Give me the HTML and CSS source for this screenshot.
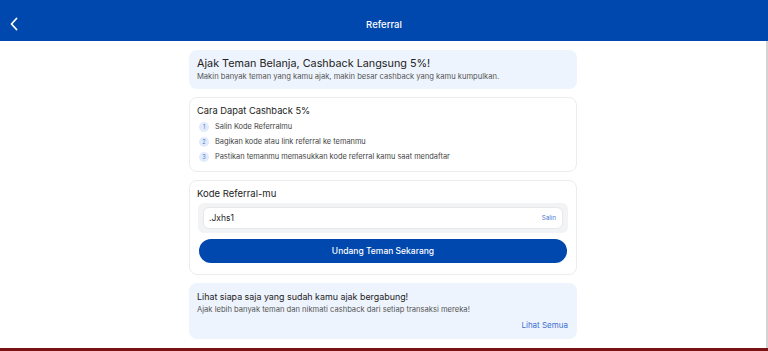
FILE: index.html
```html
<!DOCTYPE html>
<html>
<head>
    <meta charset="UTF-8">
    <meta name="viewport" content="width=device-width, initial-scale=1.0">
    <title>Referral</title>
    <link rel="stylesheet" href="styles.css">
</head>
<body>
    <header class="topbar">
        <button class="back-btn" aria-label="Kembali">
            <svg width="10" height="14" viewBox="0 0 10 14">
                <path d="M7.5 1.5 L2.5 7 L7.5 12.5" fill="none" stroke="#fff" stroke-width="1.8" stroke-linecap="round" stroke-linejoin="round"/>
            </svg>
        </button>
        <div class="topbar-title">Referral</div>
    </header>

    <main class="page">
        <div class="content">
            <section class="card card-info">
                <h2 class="info-title">Ajak Teman Belanja, Cashback Langsung 5%!</h2>
                <p class="info-text">Makin banyak teman yang kamu ajak, makin besar cashback yang kamu kumpulkan.</p>
            </section>

            <section class="card card-white card-steps">
                <h3 class="card-title">Cara Dapat Cashback 5%</h3>
                <ol class="steps">
                    <li><span class="step-num">1</span>Salin Kode Referralmu</li>
                    <li><span class="step-num">2</span>Bagikan kode atau link referral ke temanmu</li>
                    <li><span class="step-num">3</span>Pastikan temanmu memasukkan kode referral kamu saat mendaftar</li>
                </ol>
            </section>

            <section class="card card-white card-code">
                <h3 class="code-title">Kode Referral-mu</h3>
                <div class="code-wrap">
                    <div class="code-box">
                        <span class="code-value">.Jxhs1</span>
                        <button class="copy-btn">Salin</button>
                    </div>
                </div>
                <button class="btn">Undang Teman Sekarang</button>
            </section>

            <section class="card card-info card-friends">
                <h3 class="friends-title">Lihat siapa saja yang sudah kamu ajak bergabung!</h3>
                <p class="friends-text">Ajak lebih banyak teman dan nikmati cashback dari setiap transaksi mereka!</p>
                <a class="see-all" href="#">Lihat Semua</a>
            </section>
        </div>
    </main>

    <div class="bottom-strip"></div>
</body>
</html>
```

FILE: styles.css
```css
* {
    box-sizing: border-box;
}

body {
    font-family: Inter, 'Noto Sans', sans-serif;
    background: white;
    margin: 0;
    height: 351px;
    overflow: hidden;
    display: flex;
    flex-direction: column;
    color: #222;
}

.topbar {
    background: #0048ad;
    height: 41px;
    display: flex;
    align-items: center;
    justify-content: center;
    position: relative;
    flex-shrink: 0;
}

.back-btn {
    position: absolute;
    left: 9px;
    top: 17px;
    background: none;
    border: none;
    padding: 0;
    width: 10px;
    height: 14px;
    display: flex;
}

.topbar-title {
    color: white;
    font-size: 9.5px;
    font-weight: 500;
    margin-top: 7px;
}

.page {
    flex: 1;
    border-right: 2px solid #d4d4d4;
    padding-top: 9px;
    overflow: hidden;
}

.content {
    width: 388px;
    margin: 0 auto;
    display: flex;
    flex-direction: column;
    gap: 8px;
}

.card {
    border-radius: 8px;
}

.card-info {
    background: #eef4fd;
    padding: 7px 8px;
}

.card-white {
    background: white;
    border: 1px solid #ececec;
    padding: 6px 7px 7px;
}

.card-steps {
    padding-bottom: 6px;
}

.info-title {
    margin: 0;
    font-size: 10.8px;
    line-height: 14px;
    font-weight: 400;
}

.info-text {
    margin: 0;
    font-size: 7.6px;
    line-height: 11px;
    color: #555;
}

.card-title {
    margin: 0;
    font-size: 9.3px;
    line-height: 14px;
    font-weight: 400;
}

.steps {
    list-style: none;
    margin: 1px 0 0;
    padding: 0;
}

.steps li {
    display: flex;
    align-items: center;
    height: 15.2px;
    font-size: 7.4px;
    color: #444;
}

.step-num {
    width: 10px;
    height: 10px;
    border-radius: 50%;
    background: #e2ebfb;
    color: #4a7bd0;
    font-size: 5.5px;
    display: flex;
    align-items: center;
    justify-content: center;
    margin-left: 2px;
    margin-right: 6px;
}

.card-code {
    padding-bottom: 11px;
}

.code-title {
    margin: 0;
    font-size: 9.5px;
    line-height: 14px;
    font-weight: 400;
}

.code-wrap {
    background: #f2f3f5;
    border-radius: 6px;
    padding: 4px 5px;
    margin: 2px 1px 0;
}

.code-box {
    background: white;
    border: 1px solid #e8e8e8;
    border-radius: 6px;
    height: 22px;
    display: flex;
    align-items: center;
    justify-content: space-between;
    padding: 0 6px 0 5px;
}

.code-value {
    font-size: 8.5px;
    color: #222;
}

.copy-btn {
    background: none;
    border: none;
    padding: 0;
    font-family: inherit;
    font-size: 6.3px;
    color: #4a7bd0;
}

.btn {
    display: block;
    width: 368px;
    margin: 6px auto 0;
    height: 24px;
    border: none;
    border-radius: 12px;
    background: #0048ad;
    color: white;
    font-family: inherit;
    font-size: 8.5px;
    font-weight: 500;
}

.card-friends {
    display: flex;
    flex-direction: column;
    padding: 7px 9px 8px 8px;
}

.friends-title {
    margin: 0;
    font-size: 8.9px;
    line-height: 13px;
    font-weight: 400;
}

.friends-text {
    margin: 1px 0 0;
    font-size: 7.6px;
    line-height: 12px;
    color: #555;
}

.see-all {
    align-self: flex-end;
    margin-top: 3px;
    font-size: 8px;
    line-height: 12px;
    color: #3d6fd1;
    text-decoration: none;
}

.bottom-strip {
    height: 3px;
    background: #7a1414;
    flex-shrink: 0;
}
```
